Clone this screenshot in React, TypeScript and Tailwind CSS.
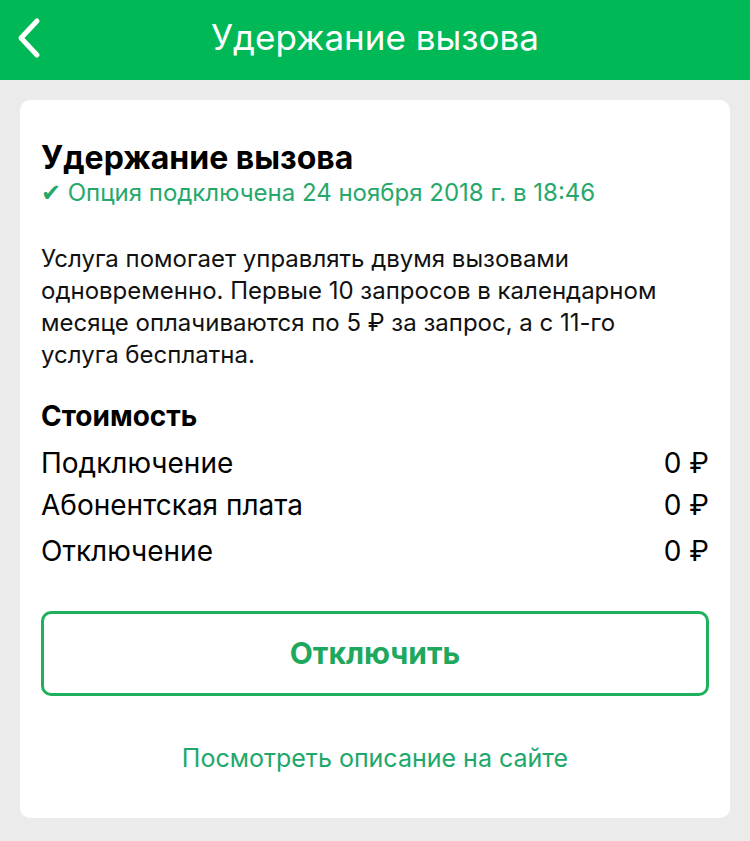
import React from 'react';

const rows = [
  { label: 'Подключение', value: '0 ₽', gap: 'mt-[13px]' },
  { label: 'Абонентская плата', value: '0 ₽', gap: 'mt-[8px]' },
  { label: 'Отключение', value: '0 ₽', gap: 'mt-[12px]' },
];

export default function App() {
  return (
    <div className="min-h-[841px] w-[750px] bg-[#ebebeb] font-['Inter',sans-serif] text-black">
      {/* Header */}
      <header className="relative flex h-[80px] items-center justify-center bg-[#00b956]">
        <button className="absolute left-[12px] top-[16px] flex h-[44px] w-[32px] items-center justify-center">
          <svg width="28" height="42" viewBox="0 0 28 42" fill="none">
            <path d="M23 4 L7 21 L23 38" stroke="white" strokeWidth="5" strokeLinecap="round" strokeLinejoin="round" />
          </svg>
        </button>
        <h1 className="-mt-[6px] text-[35px] font-normal leading-none text-white">Удержание вызова</h1>
      </header>

      <div className="px-[20px] pt-[20px] pb-[23px]">
        <div className="rounded-[10px] bg-white px-[21px] pt-[40px] pb-[45px]">
          <h2 className="text-[32px] font-bold leading-[36px]">Удержание вызова</h2>
          <p className="mt-[2px] text-[24px] leading-[30px] text-[#27a86b]">✔ Опция подключена 24 ноября 2018 г. в 18:46</p>

          <p className="mt-[35px] max-w-[650px] text-[24px] leading-[32px] text-[#111]">
            Услуга помогает управлять двумя вызовами одновременно. Первые 10 запросов в календарном месяце оплачиваются по 5 ₽ за запрос, а с 11-го услуга бесплатна.
          </p>

          <h3 className="mt-[28px] text-[28px] font-bold leading-[34px]">Стоимость</h3>
          <div className="flex flex-col">
            {rows.map((r) => (
              <div key={r.label} className={`flex items-center justify-between text-[28px] leading-[34px] ${r.gap}`}>
                <span>{r.label}</span>
                <span>{r.value}</span>
              </div>
            ))}
          </div>

          <button className="mt-[43px] flex h-[85px] w-full items-center justify-center rounded-[10px] border-[3px] border-[#1cb15a] text-[30px] font-bold text-[#1ea85e]">
            Отключить
          </button>

          <div className="mt-[47px] text-center text-[25px] leading-[30px] text-[#20a86a]">Посмотреть описание на сайте</div>
        </div>
      </div>
    </div>
  );
}
